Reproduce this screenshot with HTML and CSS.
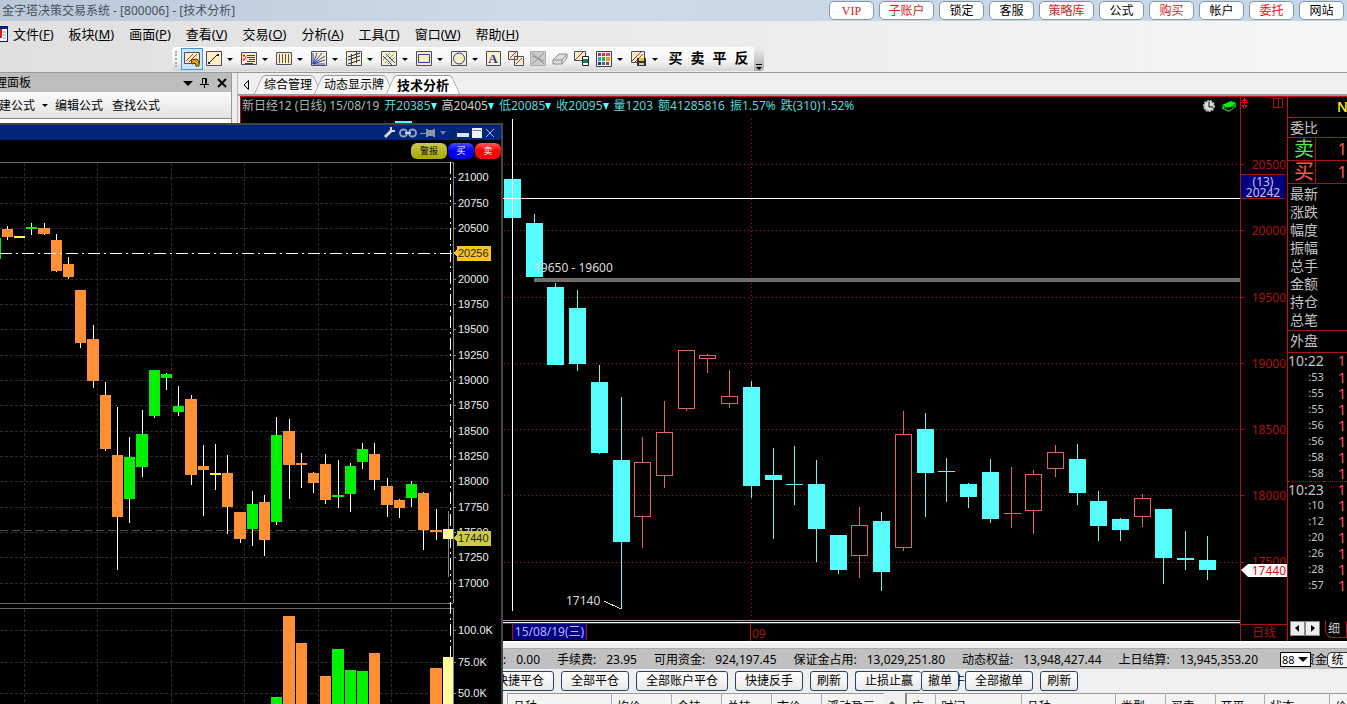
FILE: index.html
```html
<!DOCTYPE html>
<html lang="zh-CN">
<head>
<meta charset="utf-8">
<title>金字塔决策交易系统</title>
<link rel="stylesheet" href="styles.css">
</head>
<body class="app">
<header class="titlebar">
  <h1 class="titlebar-text">金字塔决策交易系统 - [800006] - [技术分析]</h1>
  <div class="quick-links">
    <button class="quick hot latin">VIP</button><button class="quick hot wide">子账户</button><button class="quick">锁定</button><button class="quick">客服</button><button class="quick hot wide">策略库</button><button class="quick">公式</button><button class="quick hot">购买</button><button class="quick">帐户</button><button class="quick hot">委托</button><button class="quick">网站</button>
  </div>
</header>

<nav class="menubar">
  <svg class="menu-logo" width="8" height="16"><path fill="#fff" d="M0 0h8v16H0z"/><path fill="#0a1c78" d="M0 0h8v3H0zM7 0h1v16H7zM0 15h8v1H0z"/><path fill="#e01818" d="M0 3h2v9H0z"/><path stroke="#888" d="M3 6h3M3 9h3M3 12h3"/></svg>
  <button class="menu">文件(<u>F</u>)</button><button class="menu">板块(<u>M</u>)</button><button class="menu">画面(<u>P</u>)</button><button class="menu">查看(<u>V</u>)</button><button class="menu">交易(<u>O</u>)</button><button class="menu">分析(<u>A</u>)</button><button class="menu">工具(<u>T</u>)</button><button class="menu">窗口(<u>W</u>)</button><button class="menu">帮助(<u>H</u>)</button>
</nav>

<div class="toolbar-row">
  <div class="toolbar">
    <span class="grip"></span>
    <button class="tool selected" aria-label="画线工具"><svg width="16" height="16"><path class="tile" d="M.5 1.5h15v11H.5z"/><path stroke="#d03030" d="M2 10l7-7M5 11l8-8"/><path fill="#e0a020" stroke="#553300" d="M7 9l6-1 2 3v4h-3l-1-3-3 1z"/></svg></button>
    <button class="tool" aria-label="直线"><svg width="16" height="16"><path class="tile" d="M.5.5h15v14H.5z"/><path stroke="#222" d="M3 12l9-9"/><path fill="#222" d="M2 11h2v2H2zM11 3h2v2h-2z"/></svg></button><button class="caret" aria-label="更多直线"></button>
    <button class="tool" aria-label="列表"><svg width="16" height="16"><path class="tile" d="M.5 1.5h15v12H.5z"/><path stroke="#2040b0" d="M6 4.5h8M6 6.5h8M8 8.5h6M6 10.5h8M4 12.5h8"/><path stroke="#e02020" stroke-width="2" stroke-dasharray="2 1" d="M2 4l3 2M2 9l3-2"/></svg></button><button class="caret" aria-label="更多列表"></button>
    <button class="tool" aria-label="周期线"><svg width="16" height="16"><path class="tile" d="M.5 1.5h15v12H.5z"/><path stroke="#554" d="M3.500 3v9M6.500 3v9M9.500 3v9M12.500 3v9"/></svg></button><button class="caret" aria-label="更多周期线"></button>
    <button class="tool" aria-label="扇形线"><svg width="16" height="16"><path class="tile" d="M.5.5h15v14H.5z"/><path stroke="#2040b0" fill="none" d="M2 13V2M2 13L6 2M2 13l9-11M2 13l12-8M2 13l12-4M2 13h12"/></svg></button><button class="caret" aria-label="更多扇形线"></button>
    <button class="tool" aria-label="通道线"><svg width="16" height="16"><path class="tile" d="M.5.5h15v14H.5z"/><path stroke="#222" d="M2 6l12-4M2 9l12-4M2 13l12-4"/><path stroke="#2040b0" d="M5.500 3v11M10.500 1v11"/></svg></button><button class="caret" aria-label="更多通道线"></button>
    <button class="tool" aria-label="平行线"><svg width="16" height="16"><path class="tile" d="M.5.5h15v14H.5z"/><path stroke="#2040b0" d="M2 5l9 9M5 3l9 9"/><path stroke="#777" stroke-dasharray="2 1" d="M2 9l7-7M4 12l9-9M7 13l7-7"/></svg></button><button class="caret" aria-label="更多平行线"></button>
    <button class="tool" aria-label="矩形"><svg width="16" height="16"><path class="tile" d="M.5.5h15v14H.5z"/><path stroke="#2040b0" fill="none" d="M2.500 3.500h11v8h-11z"/></svg></button><button class="caret" aria-label="更多矩形"></button>
    <button class="tool" aria-label="圆形"><svg width="16" height="16"><path class="tile" d="M.5.5h15v14H.5z"/><circle cx="8" cy="7.500" r="5.500" stroke="#2040b0" fill="none"/></svg></button><button class="caret" aria-label="更多圆形"></button>
    <button class="tool single" aria-label="文字"><svg width="16" height="16"><path class="tile" d="M.5.5h14v14H.5z"/><text class="tool-letter" x="7" y="12">A</text></svg></button>
    <button class="tool single" aria-label="复制图形"><svg width="16" height="16"><path class="tile" d="M.5.5h9v8h-9zM6.500 5.500h9v9h-9z"/><path stroke="#c03030" d="M2 7l6-6M8 13l6-6"/></svg></button>
    <button class="tool single" aria-label="删除图形" disabled><svg width="16" height="16"><path fill="#ccc" stroke="#aaa" d="M.5.5h15v14H.5z"/><path stroke="#909090" d="M2 2l12 11M14 2L2 13M2 5l12 5"/></svg></button>
    <button class="tool single" aria-label="橡皮擦" disabled><svg width="16" height="16"><path fill="#ddd" stroke="#8c8c8c" d="M1 9l6-6h8l-5 6zM1 9v4h9V9M10 13l5-6V3"/></svg></button>
    <button class="tool single" aria-label="锁定图形"><svg width="16" height="16"><path class="tile" d="M.5.500h11v9H.5z"/><path stroke="#c03030" d="M1 9l8-8"/><path fill="#fff" stroke="#222" d="M8.500 5.500h6v9h-6z"/><path fill="#108060" d="M9 8h5v4H9z"/></svg></button>
    <button class="tool" aria-label="颜色"><svg width="16" height="16"><path fill="#f8f0e8" stroke="#444" d="M.5.5h15v15H.5z"/><path fill="#a030a0" d="M2 2h3v3H2zM10 11h3v3h-3z"/><path fill="#e03030" d="M6 2h3v3H6z"/><path fill="#e040a0" d="M10 2h4v3h-4z"/><path fill="#30a0d0" d="M2 6h3v4H2z"/><path fill="#30b040" d="M6 6h3v4H6z"/><path fill="#e0a020" d="M10 6h4v4h-4z"/><path fill="#2030a0" d="M2 11h3v3H2z"/><path fill="#208080" d="M6 11h3v3H6z"/></svg></button><button class="caret" aria-label="更多颜色"></button>
    <button class="tool" aria-label="保存图形"><svg width="16" height="16"><path class="tile" d="M.5.5h13v11H.5z"/><path stroke="#c03030" d="M1 10l9-9M4 11l8-8"/><path fill="#333" d="M6 7h9v8H6z"/><path fill="#e8c040" d="M8 7h5v3H8z"/><path fill="#ccc" d="M8 12h5v2H8z"/></svg></button><button class="caret" aria-label="更多保存"></button>
    <button class="tool trade">买</button><button class="tool trade">卖</button><button class="tool trade">平</button><button class="tool trade">反</button>
    <button class="overflow" aria-label="工具栏选项"><svg width="10" height="10"><path stroke="#000" d="M2 3.500h6"/><path d="M2 6h6L5 9z"/></svg></button>
  </div>
</div>

<main class="workspace">
  <aside class="side">
    <div class="side-head"><span class="side-title">理面板</span>
      <button class="side-icon" aria-label="菜单"><svg width="10" height="10"><path d="M0 3h10L5 8z"/></svg></button>
      <button class="side-icon" aria-label="固定"><svg width="10" height="10"><path fill="none" stroke="#000" d="M2.500 5.500v-5h4v5M0 6.500h9M4.500 7v3M5.500 1v5"/></svg></button>
      <button class="side-icon" aria-label="关闭"><svg width="10" height="10"><path stroke="#000" stroke-width="2" d="M1 1l8 8M9 1L1 9"/></svg></button>
    </div>
    <div class="side-tools"><button class="side-cmd cut">建公式</button><button class="caret" aria-label="更多公式"></button><button class="side-cmd">编辑公式</button><button class="side-cmd">查找公式</button></div>
    <div class="side-body"></div>
  </aside>

  <section class="main">
    <div class="tabs">
      <button class="tab-prev" aria-label="上一个"><svg width="8" height="12"><path fill="none" stroke="#000" d="M6.500 1.500v9L2 6z"/></svg></button>
      <button class="tab"><span>综合管理</span></button><button class="tab"><span>动态显示牌</span></button><button class="tab active"><span>技术分析</span></button>
    </div>

    <div class="market">
      <div class="chart">
        <div class="chart-info"><span class="dim">新日经12 (日线) 15/08/19</span><span>开20385<i></i></span><span class="pale">高20405<i></i></span><span>低20085<i></i></span><span>收20095<i></i></span><span>量1203</span><span>额41285816</span><span>振1.57%</span><span>跌(310)1.52%</span>
          <span class="chart-icons">
            <svg width="12" height="12"><circle cx="6" cy="6" r="5" fill="#ddd" stroke="#bbb" stroke-width="2" stroke-dasharray="2 1"/><path fill="none" stroke="#000" d="M6 2v5h4"/></svg>
            <svg width="16" height="12"><path fill="#10f010" d="M1 5l9-4 5 2-7 6z"/><path fill="#0a9a20" d="M1 5l7 3v4L1 9zM8 8l7-5v4l-7 5z"/><path stroke="#7f7" stroke-dasharray="1 1" d="M2 8l6 3 6-4"/></svg>
          </span>
        </div>
        <svg class="plot">
          <g transform="translate(-241 -117)" shape-rendering="crispEdges">
            <path class="grid-red" d="M504 164.500H3000M504 230.500H3000M504 297.500H3000M504 363.500H3000M504 429.500H3000M504 495.500H3000M504 562.500H3000M751.500 119V620"/>
            <path fill="#5ff" d="M395 121h17v3h-17zM504 179h17v39h-17zM526 223h17v54h-17zM547 287h17v78h-17zM569 308h17v56h-17zM591 382h17v71h-17zM613 460h17v82h-17zM743 387h17v99h-17zM765 475h17v5h-17zM786 484h17v1h-17zM808 484h17v45h-17zM830 535h17v35h-17zM873 521h17v51h-17zM917 429h17v44h-17zM938 471h17v1h-17zM960 484h17v13h-17zM982 472h17v47h-17zM1069 459h17v34h-17zM1090 501h17v25h-17zM1112 519h17v11h-17zM1155 509h17v49h-17zM1177 558h17v2h-17zM1199 560h17v10h-17z"/>
            <g transform="translate(.5 0)">
              <path stroke="#7ef0e6" d="M534 214V223M555 283V287M577 290V371M599 365V454M621 397V609M751 381V498M773 448V539M794 446V505M816 460V562M838 535V574M881 512V591M925 413V517M946 458V502M968 483V508M990 459V523M1077 444V505M1098 491V541M1120 518V541M1163 509V584M1185 531V570M1207 536V580"/>
              <path stroke="#e06464" d="M642 437V462M642 517V548M664 401V432M664 476V488M686 409V411M707 354V355M707 359V373M729 370V396M729 404V408M859 507V525M859 556V578M903 411V434M903 548V551M1011 467V528M1033 470V474M1033 511V534M1055 445V452M1055 469V477M1142 494V498M1142 516V527"/>
            </g>
            <path transform="translate(.5 .5)" fill="none" stroke="#e06464" d="M634 462h16v54h-16zM656 432h16v43h-16zM678 350h16v58h-16zM699 355h16v3h-16zM721 396h16v7h-16zM851 525h16v30h-16zM895 434h16v113h-16zM1003 513h17M1025 474h16v36h-16zM1047 452h16v16h-16zM1134 498h16v18h-16z"/>
            <path fill="#6e6e6e" d="M534 278H3000V282H534z"/>
            <path fill="#fff" d="M503 198H3000V199H503zM512 119h1v492h-1z"/>
            <path fill="#8c9cc4" d="M240 620H3000V621H240z"/>
            <path fill="#fff" d="M240 622H3000V623H240z"/>
            <path stroke="#ddd" d="M604 601l17 8"/>
            <text class="plot-text" x="534" y="272">19650 - 19600</text>
            <text class="plot-text" x="566" y="605">17140</text>
          </g>
        </svg>
        <div class="dates"><span class="date-cursor">15/08/19(三)</span><span class="date-month">09</span></div>
      </div>

      <div class="scale">
        <svg class="scale-plot">
          <g transform="translate(-1241 -98)">
            <path fill="none" stroke="#a81414" d="M1241 165.500h3M1241 231.500h3M1241 298.500h3M1241 364.500h3M1241 430.500h3M1241 496.500h3M1241 563.500h3M1273.500 99.500h9v9h-9zM1278.500 99v10"/>
            <path fill="#e01010" d="M1244 99h1v10h-1zM1241 103h7v1h-7zM1241 102l3.500-3 3.500 3zM1241 106l3.500 4 3.500-4z"/>
            <g class="scale-text"><text x="1286" y="170">20500</text><text x="1286" y="236">20000</text><text x="1286" y="303">19500</text><text x="1286" y="369">19000</text><text x="1286" y="435">18500</text><text x="1286" y="501">18000</text><text x="1286" y="567">17500</text></g>
            <path fill="#000080" d="M1241 176h44v23h-44z"/><path stroke="#a81414" d="M1241 175.500h44M1241 199.500h44"/>
            <g class="cursor-text"><text x="1263" y="187">(13)</text><text x="1263" y="198">20242</text></g>
            <path fill="#fff" d="M1241 571l7-6h40v13h-40z"/><text class="last-text" x="1286" y="576">17440</text>
          </g>
        </svg>
        <div class="period">日线</div>
      </div>

      <div class="quote">
        <div class="quote-name">N</div>
        <div class="quote-row tall">委比</div>
        <div class="quote-side sell"><b>卖</b><span>1</span></div>
        <div class="quote-side buy"><b>买</b><span>1</span></div>
        <div class="quote-list"><div>最新</div><div>涨跌</div><div>幅度</div><div>振幅</div><div>总手</div><div>金额</div><div>持仓</div><div>总笔</div></div>
        <div class="quote-row tall">外盘</div>
        <table class="ticks">
          <tr class="minute"><td>10:22</td><td>1</td></tr><tr><td>:53</td><td>1</td></tr><tr><td>:55</td><td>1</td></tr><tr><td>:55</td><td>1</td></tr><tr><td>:56</td><td>1</td></tr><tr><td>:56</td><td>1</td></tr><tr><td>:58</td><td>1</td></tr><tr><td>:58</td><td>1</td></tr>
          <tr class="minute"><td>10:23</td><td>1</td></tr><tr><td>:10</td><td>1</td></tr><tr><td>:12</td><td>1</td></tr><tr><td>:20</td><td>1</td></tr><tr><td>:26</td><td>1</td></tr><tr><td>:28</td><td>1</td></tr><tr><td>:57</td><td>1</td></tr>
        </table>
        <div class="quote-foot"><button class="step" aria-label="向左"><svg width="5" height="7"><path d="M4 0v7L0 3z"/></svg></button><button class="step" aria-label="向右"><svg width="5" height="7"><path d="M1 0v7l4-4z"/></svg></button><button class="detail">细</button></div>
      </div>
    </div>

    <section class="account">
      <div class="funds">
        <span class="fund"><span>:</span><span>0.00</span></span><span class="fund"><span>手续费:</span><span>23.95</span></span><span class="fund"><span>可用资金:</span><span>924,197.45</span></span><span class="fund"><span>保证金占用:</span><span>13,029,251.80</span></span><span class="fund"><span>动态权益:</span><span>13,948,427.44</span></span><span class="fund"><span>上日结算:</span><span>13,945,353.20</span></span>
        <span class="fund-end"><span class="pick"><select aria-label="账号"><option>88</option></select></span><span class="fund-cut">资金</span><button class="stat">统</button></span>
      </div>
      <div class="orders"><button class="order">快捷平仓</button><button class="order">全部平仓</button><button class="order">全部账户平仓</button><button class="order">快捷反手</button><button class="order short">刷新</button><span class="order-join"><button class="order joined">止损止赢</button><button class="order short">撤单</button><span class="sliver">牛</span><button class="order">全部撤单</button></span><button class="order short">刷新</button></div>
      <div class="lists">
        <table class="list held"><tr><th class="c104">品种</th><th class="c60">均价</th><th class="c50">今持</th><th class="c50">总持</th><th class="c50">市价</th><th>浮动盈亏</th></tr></table>
        <span class="list-up"><svg width="8" height="6"><path d="M0 5l4-4 4 4z" fill="#444"/></svg></span>
        <table class="list book"><tr><th class="c30">应</th><th class="c86">时间</th><th class="c95">品种</th><th class="c50">类型</th><th class="c50">买卖</th><th class="c50">开平</th><th class="c65">状态</th><th>价</th></tr></table>
      </div>
    </section>
  </section>
</main>

<section class="floating" aria-label="行情窗口">
  <div class="float-title">
    <button aria-label="设置"><svg width="13" height="13"><path stroke="#d8d8cc" stroke-width="3" d="M2 11l7-7"/><path fill="none" stroke="#d8d8cc" stroke-width="2" d="M8 1v4h4"/></svg></button>
    <button aria-label="链接"><svg width="18" height="10"><circle cx="4.500" cy="5" r="3.500" fill="none" stroke="#8ea0c4" stroke-width="2"/><circle cx="13.500" cy="5" r="3.500" fill="none" stroke="#8ea0c4" stroke-width="2"/><path stroke="#c8d0e0" stroke-width="2" d="M6 5h6"/></svg></button>
    <button aria-label="固定"><svg width="16" height="10"><path stroke="#8a94a8" d="M0 5.500h8"/><path fill="#8a94a8" d="M6 1h2v1h5V1h2v8h-2V8H8v1H6z"/></svg></button>
    <button aria-label="菜单"><svg width="8" height="8"><path fill="#7080a8" d="M1 2h6L4 6z"/></svg></button>
    <button class="minimize" aria-label="最小化"><svg width="12" height="10"><path fill="#dde3ef" d="M0 5h12v4H0z"/></svg></button>
    <button aria-label="最大化"><svg width="10" height="10"><path fill="#eef2f8" d="M0 0h10v10H0z"/><path stroke="#67a" d="M1 2.500h8"/></svg></button>
    <button aria-label="关闭"><svg width="10" height="10"><path stroke="#a9b8dc" d="M1 1l8 8M9 1L1 9"/></svg></button>
  </div>
  <div class="float-actions"><button class="pill alert">警报</button><button class="pill bid">买</button><button class="pill ask">卖</button></div>
  <svg class="float-plot">
    <g transform="translate(0 -162)" shape-rendering="crispEdges">
      <path class="grid-gray" d="M0 177.500H452M0 203.500H452M0 228.500H452M0 279.500H452M0 304.500H452M0 329.500H452M0 355.500H452M0 380.500H452M0 405.500H452M0 431.500H452M0 456.500H452M0 481.500H452M0 507.500H452M0 532.500H452M0 557.500H452M0 583.500H452M0 630.500H452M0 662.500H452M0 693.500H452M24.500 163V603M97.500 163V603M171.500 163V603M244.500 163V603M318.500 163V603M391.500 163V603M24.500 609V2000M97.500 609V2000M171.500 609V2000M244.500 609V2000M318.500 609V2000M391.500 609V2000"/>
      <path stroke="#484848" stroke-dasharray="8 4" d="M0 530.500H452"/>
      <path stroke="#6a6a6a" d="M0 162.500H453M0 603.500H453M0 608.500H453"/>
      <path stroke="#888" d="M453.500 162V603M453.500 608V2000M453 177.500h3M453 203.500h3M453 228.500h3M453 279.500h3M453 304.500h3M453 329.500h3M453 355.500h3M453 380.500h3M453 405.500h3M453 431.500h3M453 456.500h3M453 481.500h3M453 507.500h3M453 532.500h3M453 557.500h3M453 583.500h3M453 630.500h3M453 662.500h3M453 693.500h3M448.500 511V577"/>
      <path transform="translate(.5 0)" stroke="#fff" d="M7 226V240M31 223V235M44 223V235M56 234V272M68 257V279M80 290V348M93 325V388M105 382V451M117 407V570M129 437V523M142 410V477M154 370V418M166 373V390M178 386V416M191 395V485M203 445V516M215 444V490M227 455V534M240 512V543M252 491V546M264 495V556M276 417V525M289 419V499M301 453V488M313 472V493M325 454V504M338 460V508M350 463V512M362 443V469M374 443V490M387 478V517M399 499V518M411 481V507M423 492V550M436 509V540"/>
      <path fill="#ff9035" d="M2 229h11v8H2zM38 228h12v6H38zM51 240h11v31H51zM63 264h11v13H63zM75 290h11v53H75zM87 339h12v42H87zM100 395h11v54h-11zM112 455h11v62h-11zM185 399h12v76h-12zM198 466h11v4h-11zM222 473h11v34h-11zM234 512h12v27h-12zM259 502h11v38h-11zM283 431h12v34h-12zM296 463h11v2h-11zM308 473h11v10h-11zM320 464h11v36h-11zM369 454h11v26h-11zM381 486h12v19h-12zM394 500h11v8h-11zM418 493h11v37h-11zM430 530h12v2h-12z"/>
      <path fill="#00f000" d="M0 238h1v21H0zM26 227h11v2H26zM124 457h11v42h-11zM136 434h12v33h-12zM149 370h11v46h-11zM161 374h11v4h-11zM173 406h11v6h-11zM247 504h11v25h-11zM271 435h11v87h-11zM332 495h12v2h-12zM345 466h11v28h-11zM357 449h11v13h-11zM406 484h11v14h-11z"/>
      <path fill="#ffff30" d="M14 236h11v2H14zM210 473h11v2h-11z"/>
      <path fill="#ff9035" d="M283 616h12v2000h-12zM296 643h11v2000h-11zM320 676h11v2000h-11zM369 653h11v2000h-11zM430 668h12v2000h-12z"/>
      <path fill="#00f000" d="M271 697h11v2000h-11zM332 649h12v2000h-12zM345 670h11v2000h-11zM357 671h11v2000h-11z"/>
      <path stroke="#fff" stroke-dasharray="12 4 2 4" d="M0 253.500H453M450.500 162V2000"/>
      <path fill="#ffff99" d="M443 529h10v10h-10zM443 657h10v2000h-10z"/>
      <g class="float-text"><text x="458" y="181">21000</text><text x="458" y="207">20750</text><text x="458" y="232">20500</text><text x="458" y="283">20000</text><text x="458" y="308">19750</text><text x="458" y="333">19500</text><text x="458" y="359">19250</text><text x="458" y="384">19000</text><text x="458" y="409">18750</text><text x="458" y="435">18500</text><text x="458" y="460">18250</text><text x="458" y="485">18000</text><text x="458" y="511">17750</text><text x="458" y="536">17500</text><text x="458" y="561">17250</text><text x="458" y="587">17000</text><text x="458" y="634">100.0K</text><text x="458" y="666">75.0K</text><text x="458" y="697">50.0K</text></g>
      <path fill="#fcc41c" d="M453 253l4-4v-3h34v15h-34v-4z"/><path fill="#cccc40" d="M453 538l4-4v-3h34v15h-34v-4z"/>
      <g class="tag-text"><text x="458" y="257">20256</text><text x="458" y="542">17440</text></g>
    </g>
  </svg>
</section>
</body>
</html>
```
FILE: styles.css
```css
* { box-sizing: border-box; }
button { padding: 0; border: 0; background: none; color: inherit; font: inherit; white-space: nowrap; flex: none; }
svg { display: block; flex: none; }

.app {
  position: relative;
  display: flex;
  flex-direction: column;
  height: 100vh;
  margin: 0;
  overflow: hidden;
  background: #eee;
  color: #000;
  font: 12px/16px "Noto Sans", "Noto Sans CJK SC", sans-serif;
}

/* Title bar */
.titlebar { display: flex; align-items: center; height: 21px; padding: 0 3px 0 2px; background: linear-gradient(90deg, #bac8d8, #cddae7 40%, #c5d6e6); }
.titlebar-text { flex: 1; margin: 0; color: #45525e; font-size: 12px; font-weight: 400; }
.quick-links { display: flex; gap: 5px; }
.quick { width: 45px; height: 19px; border: 1px solid #8497a8; border-radius: 5px; background: #fff; line-height: 16px; }
.quick.wide { width: 55px; }
.quick.hot { color: #d8181c; }
.quick.latin { font-family: "Liberation Serif", serif; }

/* Menu bar */
.menubar { display: flex; align-items: center; gap: 15px; height: 26px; background: linear-gradient(90deg, #e0e0e0, #f6f6f6); font-size: 13px; }
.menu-logo { margin-right: -10px; }

/* Toolbar */
.toolbar-row { height: 26px; padding-left: 172px; border-bottom: 1px solid #999; background: linear-gradient(90deg, #e0e0e0, #f6f6f6); }
.toolbar { display: inline-flex; align-items: center; gap: 3px; height: 24px; border-radius: 4px; background: linear-gradient(#fefefe, #f4f4f4 60%, #d4d4d4); }
.grip { width: 3px; height: 16px; margin: 0 0 0 3px; border-left: 2px dotted #aaa; }
.tool { width: 16px; height: 16px; }
.tool.single { width: 19px; }
.tool.selected { display: grid; place-items: center; width: 22px; height: 22px; border: 1px solid #3c9be8; background: #cfe5fa; }
.tile { fill: #fdeec4; stroke: #4e4a6a; }
.tool-letter { fill: #1c3a9c; font: bold 13px "Liberation Serif", serif; text-anchor: middle; }
.caret { display: grid; place-items: center; width: 16px; height: 16px; margin-left: -3px; }
.caret::before { content: ""; border: 3px solid transparent; border-top-color: #000; border-bottom: 0; }
.trade { width: 19px; font: bold 14px/16px "Liberation Serif", "Noto Sans CJK SC", serif; }
.overflow { display: grid; place-items: end center; align-self: stretch; width: 10px; border-radius: 0 4px 4px 0; background: linear-gradient(#eee, #aaa); }

/* Side panel */
.workspace { display: flex; flex: 1; min-height: 0; }
.side { display: flex; flex-direction: column; width: 232px; margin-right: 5px; border-right: 1px solid #999; background: #f0f0f0; overflow: hidden; }
.side-head { display: flex; align-items: center; gap: 7px; height: 19px; padding: 1px 4px 0 0; background: #bdbdbd; }
.side-title { flex: 1; text-indent: -5px; }
.side-icon { width: 10px; height: 10px; }
.side-tools { display: flex; align-items: center; gap: 9px; height: 26px; padding-top: 1px; background: linear-gradient(#fcfcfc, #e2e2e2); }
.side-cmd.cut { margin-left: -1px; }
.side-tools .caret { width: 12px; margin: 0 -5px; }
.side-body { flex: 1; border-top: 1px solid #888; background: #fff; }

/* Tabs */
.main { display: flex; flex: 1; flex-direction: column; min-width: 0; border-left: 1px solid #bbb; }
.tabs { display: flex; align-items: end; height: 23px; padding-left: 4px; border-bottom: 2px solid #999; background: #efefef; }
.tab-prev { width: 8px; height: 19px; margin-right: 8px; }
.tab { position: relative; z-index: 0; height: 19px; padding: 0 6px; }
.tab::before, .tab::after { content: ""; position: absolute; z-index: -1; inset: 0 40% 0 0; border: 1px solid #999; border-width: 1px 0 0 1px; border-radius: 4px 0 0 0; background: #f4f4f4; transform: skewX(-24deg); }
.tab::after { inset: 0 0 0 40%; border-width: 1px 1px 0 0; border-radius: 0 4px 0 0; transform: skewX(24deg); }
.tab.active { z-index: 1; padding: 0 7px; font-size: 13px; font-weight: 700; }
.tab.active::before, .tab.active::after { background: #fff; }

/* Market view */
.market { display: grid; grid-template-columns: minmax(0, 1fr) 47px 60px; flex: 1; min-height: 0; margin-left: 2px; border-top: 1px solid #c01010; background: #000; }
.chart { display: flex; flex-direction: column; min-width: 0; min-height: 0; border-left: 1px solid #a81414; }
.chart-info { display: flex; gap: 5px; height: 20px; padding-left: 1px; color: #56d8d8; line-height: 18px; white-space: nowrap; }
.chart-info .dim { color: #b4b4b4; }
.chart-info .pale { color: #d0d0c8; }
.chart-info i { display: inline-block; border: 3px solid transparent; border-top: 7px solid #5ff; border-bottom: 0; }
.chart-icons { display: flex; gap: 6px; align-items: center; height: 17px; margin-left: auto; padding-right: 3px; }
.plot { flex: 1; width: 100%; min-height: 0; }
.grid-red { fill: none; stroke: #b01818; stroke-dasharray: 1 3; }
.plot-text { fill: #ddd; font-size: 12px; }
.dates { display: flex; height: 18px; border-top: 1px solid #a81414; padding-left: 271px; }
.date-cursor { width: 75px; height: 16px; border: solid #a81414; border-width: 0 1px; background: #000080; color: #b8b8ff; text-align: center; line-height: 16px; }
.date-month { margin-left: 163px; padding-left: 1px; border-left: 1px solid #c01010; color: #a81414; line-height: 20px; }

.scale { display: flex; flex-direction: column; min-height: 0; border-left: 1px solid #a81414; }
.scale-plot { flex: 1; width: 100%; min-height: 0; }
.scale-text, .last-text { fill: #a81414; font-size: 12px; text-anchor: end; }
.last-text { fill: #d01010; }
.cursor-text { fill: #c4c4f0; font-size: 12px; text-anchor: middle; }
.period { height: 17px; border-top: 1px solid #a81414; color: #a81414; text-align: center; }

.quote { display: flex; flex-direction: column; min-width: 0; overflow: hidden; border-left: 1px solid #c01010; color: #c4c4c4; font-size: 14px; }
.quote-name { height: 20px; padding-left: 49px; color: #ff0; font-size: 14px; font-weight: 500; line-height: 20px; }
.quote-row { height: 20px; padding-left: 2px; border-top: 1px solid #a81414; line-height: 20px; }
.quote-side { display: flex; height: 23px; border-top: 1px solid #a81414; line-height: 22px; color: #ff5858; }
.quote-side b { width: 32px; padding-left: 6px; border-right: 1px solid #a81414; font-size: 20px; font-weight: 400; }
.quote-side span { margin-left: 22px; font-size: 16px; }
.sell b { color: #50f050; }
.quote-list { padding: 1px 2px; border-top: 1px solid #a81414; line-height: 18px; }
.quote-list + .quote-row { height: 23px; border-bottom: 1px solid #a81414; }
.ticks { width: 100%; border-spacing: 0; font-size: 11px; line-height: 14px; }
.ticks td { height: 16px; padding: 0; vertical-align: middle; }
.ticks td:first-child { width: 35px; text-align: right; }
.ticks td:last-child { padding-left: 14px; color: #f05050; font-size: 15px; }
.ticks .minute td { font-size: 14px; }
.ticks .minute + tr ~ .minute td { border-top: 1px dotted #a81414; }
.quote-foot { display: flex; margin-top: auto; padding: 0 0 3px 2px; }
.step { display: grid; place-items: center; width: 15px; height: 15px; border: 1px solid #888; background: #eee; }
.detail { margin-left: 5px; width: 22px; padding-right: 4px; border: 1px solid #c01010; border-top: 0; border-radius: 0 0 0 8px; font-size: 12px; line-height: 16px; }

/* Account area */
.account { height: 63px; overflow: hidden; border-top: 2px solid #fff; background: #efefef; }
.funds { display: flex; gap: 17px; align-items: center; height: 21px; margin-top: 5px; padding: 1px 0 0 265px; border-top: 1px solid #aaa; background: #c0c0c0; white-space: nowrap; }
.fund { display: flex; gap: 10px; }
.fund-end { display: flex; align-items: center; margin-left: auto; }
.pick { position: relative; display: block; height: 15px; }
.pick::after { content: ""; position: absolute; top: 5px; right: 3px; border: 5px solid transparent; border-top-color: #000; border-bottom: 0; }
.pick select { width: 31px; height: 15px; padding: 0 0 0 1px; border: 1px solid #000; border-radius: 0; background: #fff; font: 11px/13px "Noto Sans", sans-serif; appearance: none; }
.fund-cut { width: 16px; overflow: hidden; direction: rtl; }
.stat { width: 20px; height: 16px; border: 1px solid #333; border-right: 0; border-radius: 5px 0 0 5px; background: #f4f4f4; line-height: 14px; }
.orders { display: flex; gap: 7px; height: 24px; padding: 2px 0 0 248px; }
.order { height: 20px; padding: 0 9px; border: 1px solid #24426c; border-radius: 3px; background: linear-gradient(#fff, #e8e8e6); line-height: 18px; }
.order.short { padding: 0 6px; }
.order.joined { padding-right: 8px; border-right: 0; }
.order-join { display: flex; }
.sliver { width: 6px; overflow: hidden; direction: rtl; line-height: 20px; }
.lists { display: flex; height: 24px; padding-left: 269px; }
.list { border-collapse: collapse; border-top: 1px solid #999; table-layout: fixed; background: #f4f4f4; line-height: 16px; }
.list th { height: 24px; padding: 2px 0 0 5px; border-left: 1px solid #aaa; font-weight: 400; text-align: left; white-space: nowrap; overflow: hidden; }
.held { width: 377px; }
.list-up { width: 16px; padding: 7px 4px; }
.book { flex: 1; margin-left: 5px; border-left: 2px solid #888; }
.c30 { width: 30px; }
.c50 { width: 50px; }
.c60 { width: 60px; }
.c65 { width: 65px; }
.c86 { width: 86px; }
.c95 { width: 95px; }
.c104 { width: 104px; }

/* Floating quote window */
.floating { position: absolute; top: 123px; bottom: 0; left: 0; z-index: 2; display: flex; flex-direction: column; width: 503px; border: solid #444; border-width: 2px 2px 0 0; background: #000; }
.float-title { display: flex; align-items: center; justify-content: flex-end; gap: 3px; height: 15px; padding-right: 6px; background: #00267a; }
.minimize { margin-left: 7px; }
.float-actions { display: flex; justify-content: flex-end; gap: 1px; height: 22px; padding-top: 3px; }
.pill { width: 26px; height: 16px; border-radius: 6px; color: #fff; font-size: 9px; line-height: 14px; }
.alert { width: 36px; background: linear-gradient(#c8c850, #a8a800); color: #111; }
.bid { background: linear-gradient(#4a4aff, #0000f0 50%); }
.ask { background: linear-gradient(#ff5a5a, #ff0000 50%); }
.float-plot { flex: 1; width: 100%; min-height: 0; }
.grid-gray { fill: none; stroke: #2c2c2c; stroke-dasharray: 3 2; }
.float-text { fill: #eee; font: 11px "Liberation Sans", sans-serif; }
.tag-text { fill: #222; font: 11px "Liberation Sans", sans-serif; }
```
